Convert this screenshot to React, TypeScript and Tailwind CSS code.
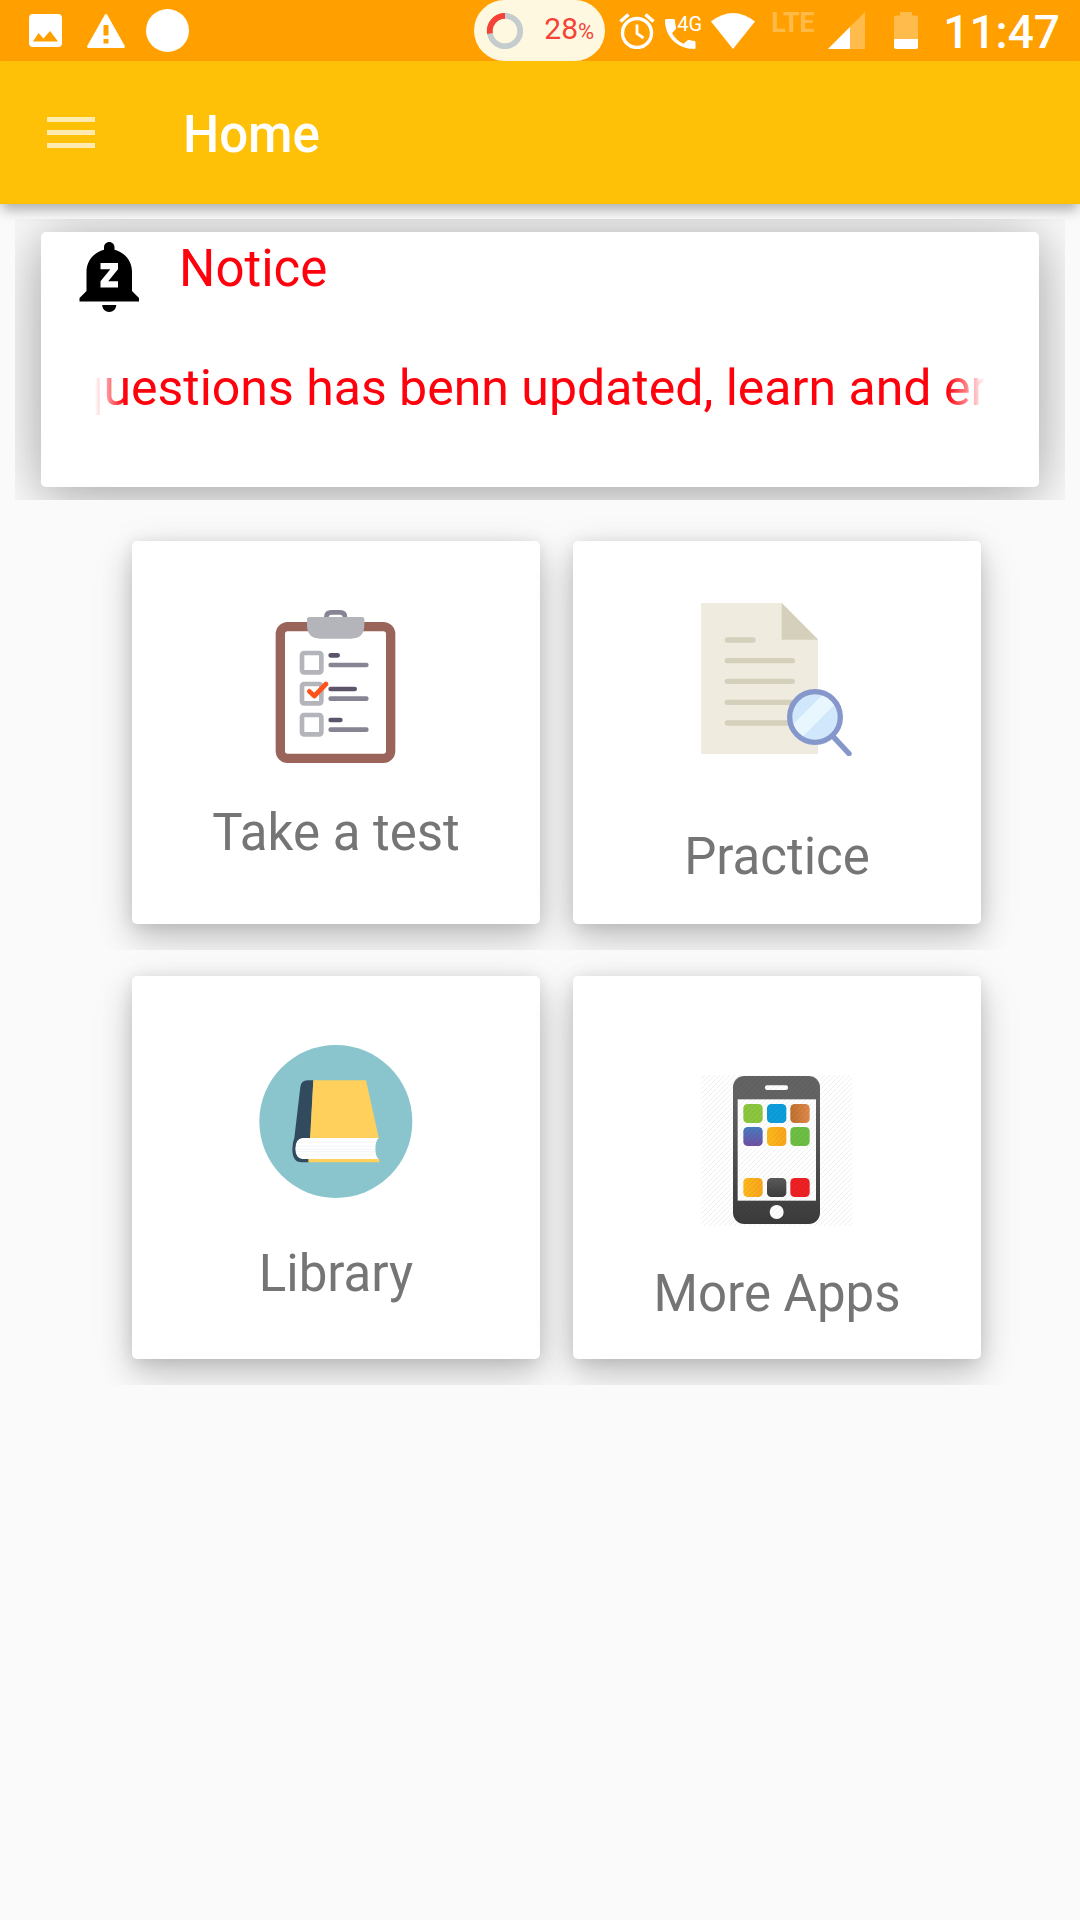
import React from "react";

function StatusBar() {
  return (
    <div className="flex h-[61px] items-center bg-[#ffa000] pr-[20px] pl-[29px] text-white">
      <svg className="h-[33px] w-[33px]" viewBox="0 0 33 33" aria-hidden="true">
        <path fill="#fff" fillRule="evenodd" d="M4 0h25a4 4 0 0 1 4 4v25a4 4 0 0 1-4 4H4a4 4 0 0 1-4-4V4a4 4 0 0 1 4-4zM4 27.500h25L21 17l-6.500 7.500L9.500 19z" />
      </svg>
      <svg className="ml-[25px] h-[34px] w-[38px]" viewBox="0 0 38 34" aria-hidden="true">
        <path fill="#fff" fillRule="evenodd" d="M17.500 1.200Q19 -1 20.500 1.200L37.800 32Q38 34 36.500 34H1.500Q0 34 .2 32zM16.500 11v10.500h5V11zM16.500 25v4.500h5V25z" />
      </svg>
      <span className="ml-[21px] h-[43px] w-[43px] rounded-full bg-white" />

      <div className="ml-auto flex h-full items-center">
        <div className="flex h-[61px] w-[131px] items-center rounded-full bg-[#fff8e1] pl-[12px] text-[#f44336]">
          <svg className="h-[36px] w-[38px]" viewBox="0 0 38 36" aria-hidden="true">
            <circle cx="19" cy="18" r="15.200" fill="none" stroke="#c5cccd" strokeWidth="5.800" />
            <path d="M19 2.800A15.200 15.200 0 0 0 4 20.500" fill="none" stroke="#f44336" strokeWidth="5.800" />
          </svg>
          <span className="ml-[20px] flex items-baseline text-[30px] leading-[36px]">
            28<span className="text-[22px]">%</span>
          </span>
        </div>
        <svg className="ml-[14px] h-[36px] w-[36px]" viewBox="0 0 36 36" fill="none" stroke="#fff" aria-hidden="true">
          <circle cx="18" cy="20" r="14.500" strokeWidth="3.400" />
          <path d="M18 11.500v9l6.500 4.500" strokeWidth="2.800" />
          <path d="M1.500 8.500l8-7M34.500 8.500l-8-7" strokeWidth="3.600" />
        </svg>
        <div className="relative ml-[10px] h-[36px] w-[37px]">
          <svg className="h-[36px] w-[37px]" viewBox="0 0 37 36" aria-hidden="true">
            <path fill="#fff" d="M1.500 6h7c1 0 1.500.6 1.500 1.500 0 2.500.4 4.800 1 7 .2.700 0 1.300-.5 1.800l-3.500 4c3 5 7 8.500 11.500 10.500l3.800-3.400c.5-.5 1.200-.6 1.800-.4 1.500.5 3.200.8 5 .9.900 0 1.400.600 1.400 1.400V35c0 .700-.5 1-1.500 1C13 36 0 24 0 7.500 0 6.600.6 6 1.500 6z" />
          </svg>
          <span className="absolute top-0 left-[12px] text-[20px] leading-[22px]">4G</span>
        </div>
        <svg className="ml-[9px] h-[36px] w-[44px]" viewBox="0 0 44 36" aria-hidden="true">
          <path fill="#fff" d="M0 8.500Q22 -8.500 44 8.500L22 36z" />
        </svg>
        <span className="ml-[16px] h-[42px] w-[46px] text-[27px] leading-[26px] font-bold text-white/30">LTE</span>
        <svg className="ml-[11px] h-[37px] w-[37px]" viewBox="0 0 37 37" aria-hidden="true">
          <path fill="#fff" fillOpacity=".3" d="M37 0v37H0z" />
          <path fill="#fff" d="M22 15v22H0z" />
        </svg>
        <svg className="ml-[29px] h-[37px] w-[24px]" viewBox="0 0 24 37" aria-hidden="true">
          <path fill="#fff" fillOpacity=".3" d="M6 0h12v3.500h4q2 0 2 2V27H0V5.500q0-2 2-2h4z" />
          <path fill="#fff" d="M0 27h24v8q0 2-2 2H2q-2 0-2-2z" />
        </svg>
        <span className="ml-[25px] pt-[4px] text-[46px] leading-[57px] font-medium">11:47</span>
      </div>
    </div>
  );
}

function AppBar() {
  return (
    <header className="relative flex h-[143px] items-center bg-[#ffc107] pl-[47px] text-white shadow-[0_8px_12px_-2px_rgba(0,0,0,0.3)]">
      <button type="button" aria-label="Open menu" className="flex h-[48px] w-[48px] flex-col justify-center gap-[8px]">
        <span className="h-[5px] w-full bg-[#ffebb0]" />
        <span className="h-[5px] w-full bg-[#ffebb0]" />
        <span className="h-[5px] w-full bg-[#ffebb0]" />
      </button>
      <h1 className="ml-[88px] pt-[4px] text-[51px] leading-[60px] font-medium">Home</h1>
    </header>
  );
}

function Notice() {
  return (
    <section className="mx-[15px] mt-[15px] overflow-hidden px-[26px] py-[13px]">
      <div className="h-[255px] rounded-[5px] bg-white shadow-[0_8px_40px_rgba(0,0,0,0.18),0_4px_80px_rgba(0,0,0,0.22)]">
        <div className="flex items-start pt-[3px] pl-[28px]">
          <svg className="h-[84px] w-[84px]" viewBox="0 0 24 24" aria-hidden="true">
            <path d="M11.500 22c1.100 0 2-.9 2-2h-4c0 1.100.9 2 2 2zm6.500-6v-5.500c0-3.070-2.130-5.640-5-6.320V3.500c0-.83-.67-1.500-1.500-1.500S10 2.670 10 3.500v.68c-2.870.68-5 3.250-5 6.320V16l-2 2v1h17v-1l-2-2zm-4-6.200l-2.800 3.400H14V15H9v-1.800l2.800-3.400H9V8h5v1.800z" />
          </svg>
          <h2 className="mt-[4px] ml-[26px] text-[51px] leading-[60px] text-[#ff000d]">Notice</h2>
        </div>
        <div className="mx-[54px] mt-[39px] overflow-hidden mask-[linear-gradient(to_right,transparent,black_30px,black_calc(100%_-_38px),transparent)]">
          <p className="-ml-[20px] text-[50px] leading-[60px] whitespace-nowrap text-[#ff000d]">
            questions has benn updated, learn and er
          </p>
        </div>
      </div>
    </section>
  );
}

function ClipboardArt() {
  return (
    <svg className="h-[153px] w-[153px]" viewBox="510 270 459 459" aria-hidden="true">
      <rect x="571" y="320" width="331" height="395" rx="22" fill="#fff" stroke="#9a645b" strokeWidth="28" />
      <path d="M709 294v-2q0-15 15-15h26q15 0 15 15v2" fill="none" stroke="#878593" strokeWidth="14" />
      <path d="M658 291h158q7 0 7 7v18q0 40-40 40h-92q-40 0-40-40v-18q0-7 7-7z" fill="#b4b5bb" />
      <g fill="none" stroke="#b4b5bb" strokeWidth="14">
        <rect x="636" y="399" width="58" height="58" rx="6" />
        <rect x="636" y="492" width="58" height="58" rx="6" />
        <rect x="636" y="585" width="58" height="58" rx="6" />
      </g>
      <g strokeWidth="14" strokeLinecap="round" stroke="#5d546c">
        <path d="M722 406h21M722 507h72M722 600h29" />
        <path stroke="#878593" d="M722 435h107M722 536h107M722 629h107" />
      </g>
      <path d="M658 514l15 14 35-36" fill="none" stroke="#ff5219" strokeWidth="14" strokeLinecap="round" strokeLinejoin="round" />
    </svg>
  );
}

function DocumentArt() {
  return (
    <svg className="h-[153px] w-[153px]" viewBox="453 249 459 459" aria-hidden="true">
      <defs>
        <clipPath id="lens">
          <circle cx="795" cy="591" r="70" />
        </clipPath>
      </defs>
      <path d="M453 249h243l108 108v345H453z" fill="#efebde" />
      <path d="M695 249l109 110H695z" fill="#d5d0bb" />
      <path d="M532 360h77M532 422h195M532 484h195M532 547h195M532 609h195" stroke="#d5d0bb" strokeWidth="16" strokeLinecap="round" />
      <path d="M849 649l48 52" stroke="#8697cb" strokeWidth="16" strokeLinecap="round" />
      <circle cx="795" cy="591" r="76" fill="#d1e7fb" />
      <path clipPath="url(#lens)" d="M720 622l108-108 40 26-124 124z" fill="#e8f6fd" />
      <circle cx="795" cy="591" r="76" fill="none" stroke="#8697cb" strokeWidth="16" />
    </svg>
  );
}

function BookArt() {
  return (
    <svg className="h-[153px] w-[153px]" viewBox="509 255 459 459" overflow="visible" aria-hidden="true">
      <circle cx="736.500" cy="484.500" r="229.500" fill="#8ac5cd" />
      <path d="M669 361h-17q-20 0-22 20l-18 152q-6 16-6 34 0 40 28 40h22v-12l4-60z" fill="#324a5e" />
      <path d="M669 361h158l39 176H659zM654 596h213v11H654z" fill="#ffd05b" />
      <path d="M636 534h228q-9 12-9 32t9 31H636q-20-2-21-31 1-30 21-32z" fill="#fff" />
      <path d="M626 546h230M618 558h237M617 568h238M618 575h237M623 585h233" stroke="#eceff2" strokeWidth="2" />
    </svg>
  );
}

const appTiles = [
  { x: 580, y: 432, fill: "#8cc63f" },
  { x: 651, y: 432, fill: "#0d9ddb" },
  { x: 721, y: 432, fill: "url(#tileBrown)" },
  { x: 580, y: 501, fill: "url(#tileViolet)" },
  { x: 651, y: 501, fill: "url(#tileAmber)" },
  { x: 721, y: 501, fill: "#6fbe44" },
  { x: 580, y: 654, fill: "url(#tileAmber)" },
  { x: 651, y: 654, fill: "url(#tileGray)" },
  { x: 721, y: 654, fill: "#ed2024" },
];

function PhoneArt() {
  return (
    <svg className="h-[151px] w-[151px]" viewBox="456 345 453 453" overflow="visible" aria-hidden="true">
      <defs>
        <linearGradient id="phoneBody" x1="0" y1="0" x2="0" y2="1">
          <stop offset="0.150" stopColor="#636363" />
          <stop offset="1" stopColor="#3b3b3b" />
        </linearGradient>
        <linearGradient id="tileBrown">
          <stop stopColor="#bf6f2f" />
          <stop offset="1" stopColor="#df8a4a" />
        </linearGradient>
        <linearGradient id="tileViolet" x1="0" y1="0" x2="0" y2="1">
          <stop stopColor="#467cc0" />
          <stop offset="1" stopColor="#7050a3" />
        </linearGradient>
        <linearGradient id="tileAmber">
          <stop stopColor="#fdb91c" />
          <stop offset="1" stopColor="#f8a51b" />
        </linearGradient>
        <linearGradient id="tileGray" x1="0" y1="0" x2="0" y2="1">
          <stop stopColor="#5a5a5a" />
          <stop offset="1" stopColor="#3d3d3d" />
        </linearGradient>
        <pattern id="hatch" width="15" height="15" patternUnits="userSpaceOnUse">
          <path d="M-2 17L17 -2M-2 2L2 -2M13 17L17 13" stroke="#000" strokeOpacity=".08" strokeWidth="2.500" />
        </pattern>
      </defs>
      <rect x="549" y="348" width="261" height="444" rx="34" fill="url(#phoneBody)" />
      <rect x="563" y="418" width="235" height="304" fill="#fff" />
      <rect x="645" y="376" width="69" height="14" rx="6" fill="#fff" />
      <circle cx="680" cy="756" r="21" fill="#fff" />
      {appTiles.map((t) => (
        <rect key={`${t.x}-${t.y}`} x={t.x} y={t.y} width="58" height="57" rx="13" fill={t.fill} />
      ))}
      <rect x="454" y="345" width="453" height="453" fill="url(#hatch)" />
    </svg>
  );
}

function MenuCard({ label, className, labelClassName, children }: { label: string; className: string; labelClassName: string; children: React.ReactNode }) {
  return (
    <button
      type="button"
      className={`flex min-h-[383px] flex-col items-center justify-start rounded-[5px] bg-white text-[51px] leading-[60px] text-[#757575] shadow-[0_16px_32px_rgba(0,0,0,0.16),0_2px_16px_rgba(0,0,0,0.10),0_10px_48px_rgba(0,0,0,0.08)] ${className}`}
    >
      {children}
      <span className={labelClassName}>{label}</span>
    </button>
  );
}

function CardRow({ children }: { children: React.ReactNode }) {
  return <div className="grid grid-cols-2 gap-[33px] overflow-hidden py-[26px] pr-[99px] pl-[132px]">{children}</div>;
}

export default function App() {
  return (
    <div className="min-h-screen bg-[#fafafa] font-['Roboto',sans-serif]">
      <StatusBar />
      <AppBar />
      <main>
        <Notice />
        <nav className="mt-[15px]" aria-label="Sections">
          <CardRow>
            <MenuCard label="Take a test" className="pt-[69px]" labelClassName="mt-[40px]">
              <ClipboardArt />
            </MenuCard>
            <MenuCard label="Practice" className="pt-[62px]" labelClassName="mt-[71px]">
              <DocumentArt />
            </MenuCard>
          </CardRow>
          <CardRow>
            <MenuCard label="Library" className="pt-[69px]" labelClassName="mt-[46px]">
              <BookArt />
            </MenuCard>
            <MenuCard label="More Apps" className="pt-[99px]" labelClassName="mt-[38px]">
              <PhoneArt />
            </MenuCard>
          </CardRow>
        </nav>
      </main>
    </div>
  );
}
